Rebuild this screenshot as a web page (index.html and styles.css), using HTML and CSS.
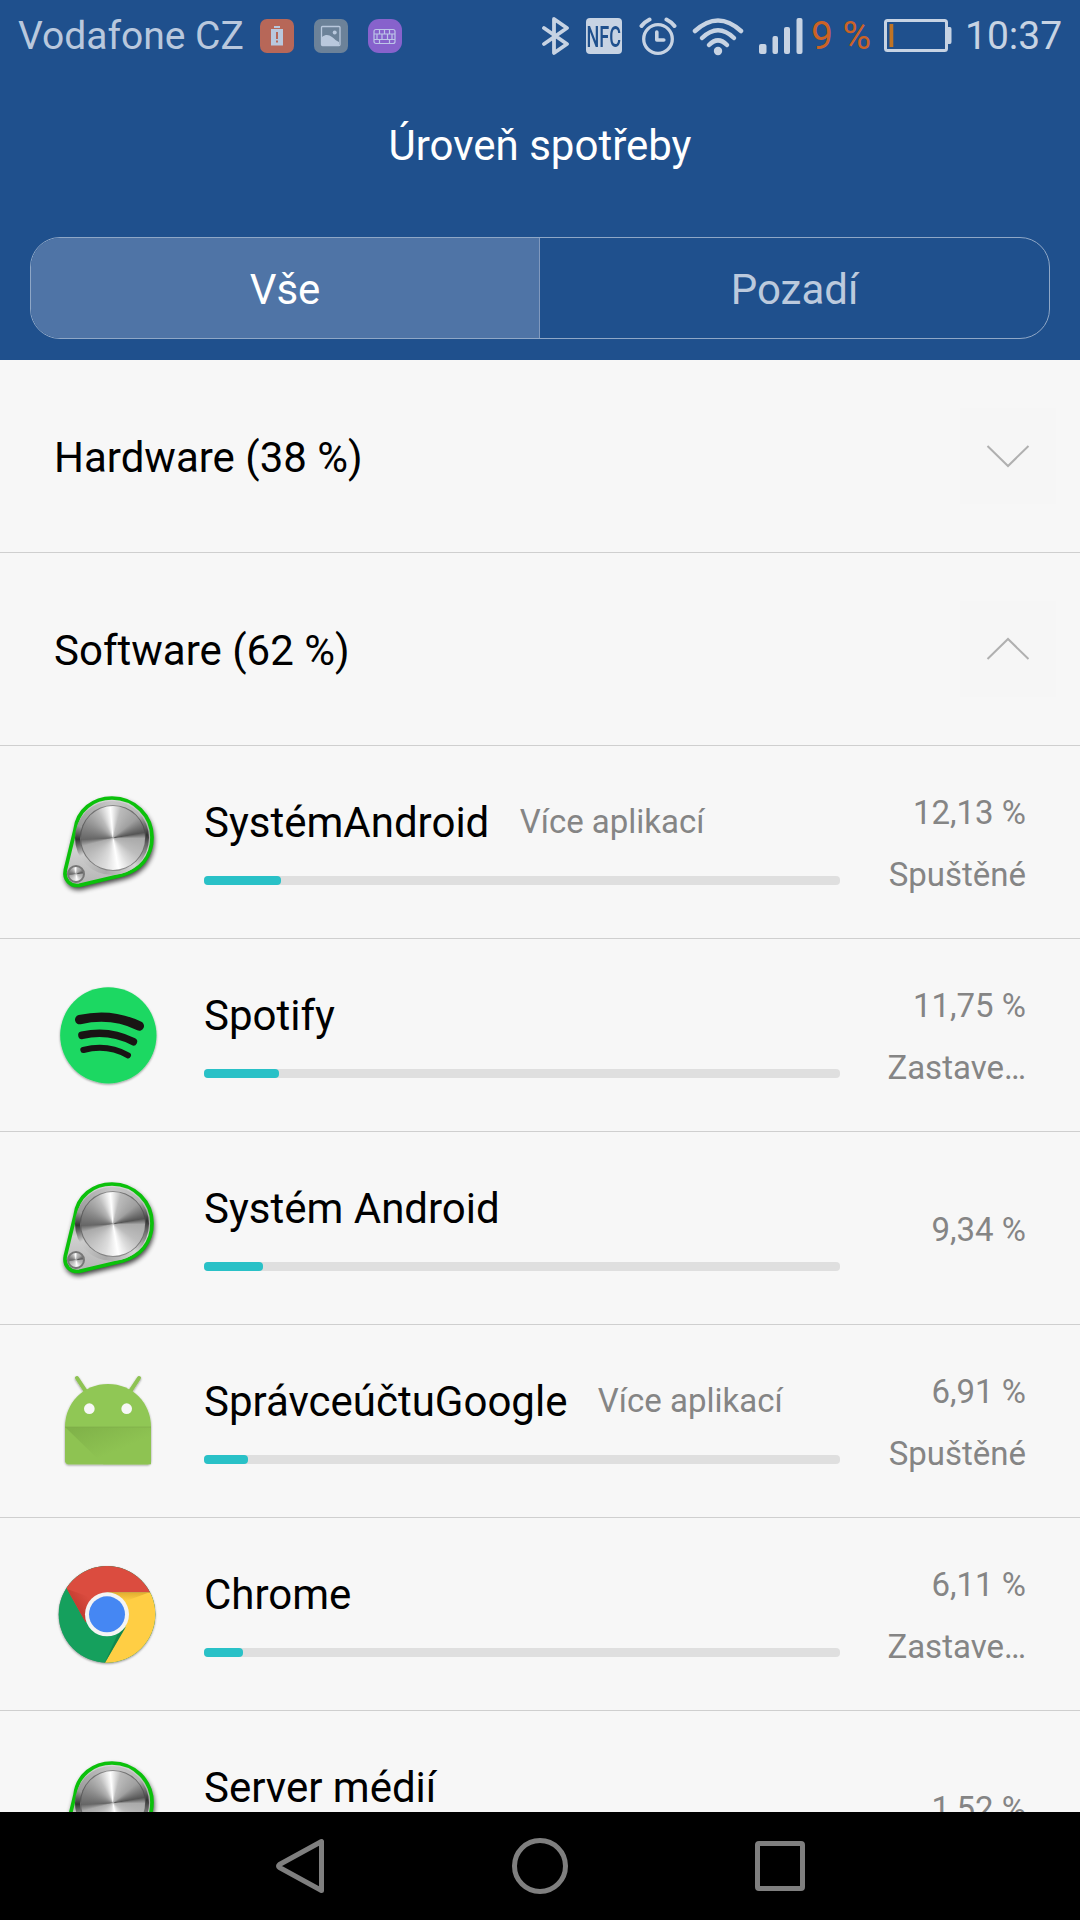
FILE: index.html
```html
<!DOCTYPE html>
<html lang="cs">
<head>
	<meta charset="utf-8">
	<title>Úroveň spotřeby</title>
	<link rel="stylesheet" href="styles.css">
</head>
<body>
	<!-- shared icons -->
	<svg class="defs" width="0" height="0">
		<defs>
			<filter id="soft" x="-20%" y="-20%" width="140%" height="140%"><feGaussianBlur stdDeviation="8"/></filter>
			<filter id="drop" x="-10%" y="-10%" width="120%" height="125%"><feDropShadow dx="0" dy="3" stdDeviation="2.5" flood-color="#000" flood-opacity="0.4"/></filter>
			<linearGradient id="plate" x1="0" y1="0" x2="0" y2="1">
				<stop offset="0" stop-color="#d8d8d8"/>
				<stop offset="0.45" stop-color="#a5a5a5"/>
				<stop offset="0.6" stop-color="#d0d0d0"/>
				<stop offset="1" stop-color="#b4b4b4"/>
			</linearGradient>
		</defs>
		<symbol id="system" viewBox="0 0 420 420">
			<path d="M105 180C112 120 160 84 216 84C284 84 336 138 336 202C336 262 300 300 248 315L118 346C92 350 70 330 76 300Z" transform="translate(3 9)" fill="#000" stroke="#000" stroke-width="8" opacity="0.75" filter="url(#soft)"/>
			<path d="M105 180C112 120 160 84 216 84C284 84 336 138 336 202C336 262 300 300 248 315L118 346C92 350 70 330 76 300Z" fill="url(#plate)" stroke="#0bc10b" stroke-width="11"/>
		</symbol>
	</svg>

	<div class="phone">
		<header class="header">
			<!-- status bar -->
			<div class="status">
				<span class="carrier">Vodafone CZ</span>
				<div class="notifications">
					<svg width="34" height="34" viewBox="0 0 34 34">
						<rect width="34" height="34" rx="7" fill="#b76758"/>
						<path d="M14 7h6v2h-6zM11 10h12v16.500h-12z" fill="#b9c8dd"/>
						<path d="M16 13h2v7h-2zM16 21.500h2v2h-2z" fill="#b76758"/>
					</svg>
					<svg width="34" height="34" viewBox="0 0 34 34">
						<rect width="34" height="34" rx="7" fill="#6c8299"/>
						<rect x="7.500" y="7.500" width="18.500" height="19" rx="1" fill="none" stroke="#b9c8dd" stroke-width="1.300"/>
						<path d="M8 18c4-3 7-2 10 0s4 4 7 5v3H8z" fill="#b9c8dd"/>
						<circle cx="20.700" cy="13.500" r="2" fill="#b9c8dd"/>
					</svg>
					<svg width="34" height="34" viewBox="0 0 34 34">
						<rect width="34" height="34" rx="11" fill="#8762cc"/>
						<path d="M8 10.500h17a2 2 0 0 1 2 2v10a2 2 0 0 1-2 2H8a2 2 0 0 1-2-2v-10a2 2 0 0 1 2-2zM6 15h21M6 20.500h21M11.500 10v5M16.500 10v5M21.500 10v5M9 15v5.500M14 15v5.500M19.500 15v5.500M24 15v5.500M11.500 20.500v4M21.500 20.500v4" fill="none" stroke="#bcc5e8" stroke-width="1.200"/>
					</svg>
				</div>
				<div class="system-icons">
					<svg class="bluetooth" width="28" height="40" viewBox="0 0 28 40">
						<path d="M2 12l23 16-13 9V3l13 9L2 28" fill="none" stroke="#c7d3e3" stroke-width="3.800" stroke-linejoin="round" stroke-linecap="round"/>
					</svg>
					<div class="nfc"><span>NFC</span></div>
					<svg class="alarm" width="38" height="40" viewBox="0 0 38 40">
						<g fill="none" stroke="#c7d3e3" stroke-linecap="round">
							<circle cx="19" cy="23" r="14.300" stroke-width="3.300"/>
							<path d="M17.800 16v8h7" stroke-width="3.600" stroke-linejoin="round"/>
							<path d="M2.500 10q3-4 8-6.500M35.500 10q-3-4-8-6.500" stroke-width="4"/>
						</g>
					</svg>
					<svg class="wifi" width="52" height="40" viewBox="0 0 52 40">
						<g fill="none" stroke="#c7d3e3" stroke-width="4.500" stroke-linecap="round">
							<path d="M3 15Q26-6 49 15"/>
							<path d="M10 22Q26 6.500 42 22"/>
							<path d="M17 29Q26 20 35 29"/>
						</g>
						<circle cx="26" cy="35" r="4.200" fill="#c7d3e3"/>
					</svg>
					<svg class="signal" width="45" height="36" viewBox="0 0 45 36">
						<g fill="#c7d3e3">
							<rect x="0" y="26" width="7.500" height="10" rx="2"/>
							<rect x="13.500" y="18" width="5.500" height="18" rx="2"/>
							<rect x="25" y="9" width="6" height="27" rx="2"/>
							<rect x="37.500" y="0" width="6" height="36" rx="2"/>
						</g>
					</svg>
					<span class="charge">9 %</span>
					<svg class="battery" width="68" height="34" viewBox="0 0 68 34">
						<rect x="1.500" y="1.500" width="61" height="30" rx="2" fill="none" stroke="#c7d3e3" stroke-width="3"/>
						<path d="M64 8h2q1.500 0 1.500 2v13q0 2-1.500 2h-2z" fill="#c7d3e3"/>
						<rect x="5.500" y="5" width="3.800" height="23" fill="#c07425"/>
					</svg>
					<span class="clock">10:37</span>
				</div>
			</div>

			<h1 class="title">Úroveň spotřeby</h1>

			<div class="tabs">
				<div class="tab active">Vše</div>
				<div class="tab">Pozadí</div>
			</div>
		</header>

		<main class="list">
			<div class="group">
				<span>Hardware (38 %)</span>
				<svg width="96" height="96" viewBox="0 0 96 96"><path d="M27.500 38l20.500 20 20.500-20"/></svg>
			</div>
			<div class="group">
				<span>Software (62 %)</span>
				<svg width="96" height="96" viewBox="0 0 96 96"><path d="M27.500 58l20.500-20 20.500 20"/></svg>
			</div>

			<div class="row">
				<div class="app-icon">
					<svg width="140" height="140"><use href="#system"/></svg>
					<div class="rim"></div>
					<div class="dial"></div>
					<div class="dial small"></div>
				</div>
				<div class="info">
					<div class="name">SystémAndroid <span class="more">Více aplikací</span></div>
					<div class="bar"><div class="fill" style="width: 12.13%"></div></div>
				</div>
				<div class="usage"><span>12,13 %</span><span>Spuštěné</span></div>
			</div>

			<div class="row">
				<svg class="app-icon" viewBox="0 -6 420 420">
					<circle cx="205" cy="211" r="144.500" fill="#1fd862" filter="url(#drop)"/>
					<g fill="none" stroke="#191414" stroke-linecap="round">
						<path d="M119 164Q214 142 298 183" stroke-width="28"/>
						<path d="M126 211Q206 192 280 230" stroke-width="23"/>
						<path d="M130 255Q202 236 264 271" stroke-width="18"/>
					</g>
				</svg>
				<div class="info">
					<div class="name">Spotify</div>
					<div class="bar"><div class="fill" style="width: 11.75%"></div></div>
				</div>
				<div class="usage"><span>11,75 %</span><span>Zastave…</span></div>
			</div>

			<div class="row">
				<div class="app-icon">
					<svg width="140" height="140"><use href="#system"/></svg>
					<div class="rim"></div>
					<div class="dial"></div>
					<div class="dial small"></div>
				</div>
				<div class="info">
					<div class="name">Systém Android</div>
					<div class="bar"><div class="fill" style="width: 9.34%"></div></div>
				</div>
				<div class="usage"><span>9,34 %</span></div>
			</div>

			<div class="row">
				<svg class="app-icon" viewBox="0 -18 420 420">
					<defs>
						<linearGradient id="fold" gradientUnits="userSpaceOnUse" x1="110" y1="216" x2="155" y2="320">
							<stop offset="0" stop-color="#80b249"/>
							<stop offset="1" stop-color="#8ec352"/>
						</linearGradient>
					</defs>
					<g filter="url(#drop)">
						<path d="M111 69L136 107M297 69L272 107" stroke="#8ec352" stroke-width="12" stroke-linecap="round"/>
						<path d="M75 216C75 144 130 87 204 87S333 144 333 216V314Q333 328 319 328H89Q75 328 75 314Z" fill="#90c754"/>
					</g>
					<path d="M75 216H333V314Q333 328 319 328H89Q75 328 75 314Z" fill="#8ec352"/>
					<path d="M75 216H333V328H190Z" fill="url(#fold)"/>
					<path d="M75 216H333" stroke="#7fae49" stroke-width="2"/>
					<circle cx="148" cy="161" r="16" fill="#f7f7f7"/>
					<circle cx="260" cy="161" r="16" fill="#f7f7f7"/>
				</svg>
				<div class="info">
					<div class="name">SprávceúčtuGoogle <span class="more">Více aplikací</span></div>
					<div class="bar"><div class="fill" style="width: 6.91%"></div></div>
				</div>
				<div class="usage"><span>6,91 %</span><span>Spuštěné</span></div>
			</div>

			<div class="row">
				<svg class="app-icon" viewBox="0 -9 420 420">
					<defs>
						<clipPath id="disc"><circle cx="201" cy="208" r="145"/></clipPath>
						<linearGradient id="redShade" gradientUnits="userSpaceOnUse" x1="120" y1="205" x2="160" y2="175">
							<stop offset="0" stop-color="#c33c30"/>
							<stop offset="1" stop-color="#db4c3f"/>
						</linearGradient>
						<linearGradient id="yellowShade" x1="0" y1="0" x2="0" y2="1">
							<stop offset="0" stop-color="#e3ae30"/>
							<stop offset="1" stop-color="#ffce44"/>
						</linearGradient>
					</defs>
					<circle cx="201" cy="208" r="145" fill="#888" filter="url(#drop)"/>
					<g clip-path="url(#disc)">
						<rect x="50" y="60" width="300" height="300" fill="#15a05d"/>
						<path d="M201 142H360V360H191L258 240Z" fill="#ffce44"/>
						<path d="M50 50H360V142H201L137 232L81 132Z" fill="#db4c3f"/>
						<path d="M81 132L137 232L160 160Z" fill="url(#redShade)"/>
						<path d="M215 143H325L258 168Z" fill="url(#yellowShade)"/>
						<path d="M258 245L191 360L232 270Z" fill="#12874e"/>
					</g>
					<circle cx="201" cy="208" r="66" fill="#f4f4f4"/>
					<circle cx="201" cy="208" r="54" fill="#4587f3"/>
				</svg>
				<div class="info">
					<div class="name">Chrome</div>
					<div class="bar"><div class="fill" style="width: 6.11%"></div></div>
				</div>
				<div class="usage"><span>6,11 %</span><span>Zastave…</span></div>
			</div>

			<div class="row">
				<div class="app-icon">
					<svg width="140" height="140"><use href="#system"/></svg>
					<div class="rim"></div>
					<div class="dial"></div>
					<div class="dial small"></div>
				</div>
				<div class="info">
					<div class="name">Server médií</div>
					<div class="bar"><div class="fill" style="width: 1.52%"></div></div>
				</div>
				<div class="usage"><span>1,52 %</span></div>
			</div>
		</main>

		<!-- navigation buttons -->
		<nav class="nav">
			<svg width="60" height="60" viewBox="0 0 60 60"><path d="M51.500 5.500v49L9.500 31.500q-2-1.500 0-3z"/></svg>
			<svg width="60" height="60" viewBox="0 0 60 60"><circle cx="30" cy="30" r="25.500"/></svg>
			<svg width="60" height="60" viewBox="0 0 60 60"><rect x="7.500" y="7.500" width="45" height="45" rx="1.500"/></svg>
		</nav>
	</div>
</body>
</html>
```
FILE: styles.css
```css
* {
	box-sizing: border-box;
}

body {
	margin: 0;
	font-family: Roboto, "Noto Sans", sans-serif;
}

.defs {
	position: absolute;
}

.phone {
	display: flex;
	flex-direction: column;
	width: 1080px;
	height: 1920px;
	overflow: hidden;
	background-color: #f7f7f7;
}

.header {
	flex: none;
	height: 360px;
	background-color: #1f508d;
	color: white;
}

/* status bar */
.status {
	display: flex;
	align-items: center;
	height: 72px;
	padding: 0 20px 0 18px;
	font-size: 39px;
	line-height: 74px;
}

.carrier {
	width: 242px;
	color: #b9c8dd;
	white-space: nowrap;
}

.notifications {
	display: flex;
	gap: 18px;
}

.system-icons {
	display: flex;
	align-items: center;
	margin-left: auto;
	color: #c7d3e3;
}

.nfc {
	display: flex;
	justify-content: center;
	width: 36px;
	height: 36px;
	margin: 0 17px 0 16px;
	border-radius: 4px;
	background-color: #c7d3e3;
	color: #1f508d;
	font-size: 30px;
	font-weight: 500;
	line-height: 37px;
}

.nfc span {
	transform: scaleX(0.6);
}

.wifi {
	margin: 0 15px;
}

.charge {
	width: 73px;
	margin-left: 7px;
	color: #cb6225;
	white-space: nowrap;
}

.clock {
	width: 95px;
	margin-left: 13px;
}

.notifications {
	gap: 20px;
}

.title {
	margin: 0;
	height: 165px;
	padding-top: 49px;
	font-size: 42px;
	font-weight: 400;
	line-height: 50px;
	text-align: center;
}

/* tab switch */
.tabs {
	display: flex;
	width: 1020px;
	height: 102px;
	margin: 0 auto;
	border: 1px solid #8fa7c6;
	border-radius: 30px;
	overflow: hidden;
}

.tab {
	flex: 1;
	font-size: 42px;
	line-height: 103px;
	text-align: center;
	color: #bccadd;
}

.tab.active {
	flex: none;
	width: 509px;
	background-color: #4f74a6;
	border-right: 1px solid #8099be;
	color: white;
}

.list {
	flex: 1;
	min-height: 0;
	overflow: hidden;
}

.group,
.row {
	display: flex;
	height: 193px;
	border-bottom: 1px solid #cfcfcf;
}

.group {
	align-items: center;
	justify-content: space-between;
	padding: 0 24px 0 54px;
	font-size: 42px;
}

.group span {
	padding-top: 2px;
}

.group svg {
	background-color: #f6f6f6;
	fill: none;
	stroke: #b0b0b0;
	stroke-width: 2;
}

/* application rows */
.row {
	padding-right: 54px;
}

.app-icon {
	position: relative;
	flex: none;
	width: 140px;
	height: 140px;
	margin: 24px 24px 0 40px;
}

/* metal knobs over the system icon */
.rim,
.dial {
	position: absolute;
	border-radius: 50%;
}

.rim {
	left: 35px;
	top: 31px;
	width: 74px;
	height: 74px;
	background: conic-gradient(#c8c8c8, #b5b5b5 50deg, #333 85deg, #666 100deg, #d5d5d5 140deg, #aaa 190deg, #ccc 240deg, #333 268deg, #999 290deg, #c8c8c8);
}

.dial {
	left: 40px;
	top: 35px;
	width: 66px;
	height: 66px;
	border: 1px solid rgba(70, 70, 70, 0.6);
	background: conic-gradient(from -5deg, #fff, #bbb 20deg, #a0a0a0 55deg, #555 85deg, #aaa 96deg, #bdbdbd 130deg, #ddd 155deg, #fff 175deg, #ddd 200deg, #bbb 240deg, #aaa 260deg, #666 272deg, #8a8a8a 300deg, #bbb 335deg, #fff);
}

.dial.small {
	left: 27px;
	top: 95px;
	width: 18px;
	height: 18px;
	border: 2px solid #777;
}

.info {
	width: 636px;
	padding-top: 52px;
}

.name {
	height: 78px;
	font-size: 42px;
	line-height: 50px;
	white-space: nowrap;
}

.more {
	margin-left: 20px;
	color: #858585;
	font-size: 33px;
	vertical-align: 4px;
	line-height: 1;
}

.bar {
	height: 9px;
	border-radius: 4px;
	background-color: #dfdfdf;
}

.fill {
	height: 9px;
	border-radius: 4px;
	background-color: #29c1c7;
}

.usage {
	display: flex;
	flex: 1;
	flex-direction: column;
	justify-content: center;
	gap: 22px;
	padding-top: 4px;
	color: #858585;
	font-size: 33px;
	line-height: 40px;
	text-align: right;
	white-space: nowrap;
}

/* bottom navigation */
.nav {
	display: flex;
	flex: none;
	align-items: center;
	justify-content: center;
	gap: 180px;
	height: 108px;
	background-color: #000;
}

.nav svg {
	fill: none;
	stroke: #7f7f7f;
	stroke-width: 5;
	stroke-linejoin: round;
}
```
